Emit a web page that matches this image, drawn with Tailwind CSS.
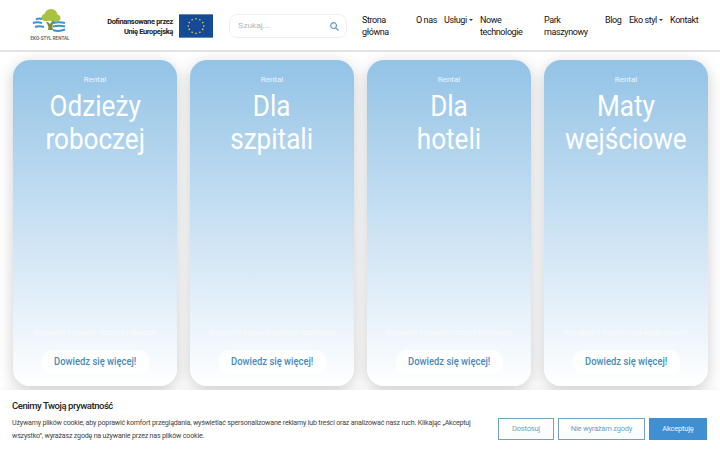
<!DOCTYPE html>
<html lang="pl"><head><meta charset="utf-8"><script src="https://cdn.jsdelivr.net/npm/@tailwindcss/browser@4"></script></head>
<body class="w-[720px] h-[450px] overflow-hidden bg-white relative font-['Roboto','Noto_Sans',sans-serif]">
<header class="h-[52px] border-b-2 border-[#e3e3e5] flex items-start bg-white">
  <div class="w-[100px] h-[50px] flex justify-center shrink-0 pt-[8px]">
    <svg width="46" height="34" viewBox="0 0 46 34">
      <path d="M21 22 C22 19 21 17 19 14 L21 14 L23 16 L26 12 L28 13 L25.500 17 C25.500 19 25.500 20 26 22 Z" fill="#7d8c3a"/>
      <ellipse cx="24" cy="7" rx="6.500" ry="6" fill="#a9c23f"/><ellipse cx="19" cy="9.500" rx="4.500" ry="3.800" fill="#a9c23f"/><ellipse cx="29" cy="10" rx="4.500" ry="3.500" fill="#a9c23f"/>
      <path d="M9 11.500 Q12 10 15 11 M6 15 Q10 13.500 15 15 M8 19 Q12 17.500 17 19 M26 15 Q32 13.500 38 15 M26 18.500 Q32 17 38 18.500 M26 22 Q32 24 38 21.500" stroke="#3c93d0" stroke-width="2" fill="none"/>
      <text x="23" y="32" text-anchor="middle" font-size="4.600" font-weight="500" fill="#555" font-family="Roboto">EKO-STYL RENTAL</text>
    </svg>
  </div>
  <div class="w-[73px] mt-[17px] text-right text-[7.500px] leading-[10px] font-bold text-[#222] whitespace-nowrap shrink-0 tracking-[-0.35px]"><div>Dofinansowane przez</div><div>Unię Europejską</div></div>
  <svg class="ml-[6px] mt-[14px] shrink-0" width="34" height="24" viewBox="0 0 35 24"><rect width="35" height="24" fill="#144a96"/><g fill="#ffd83c"><circle cx="17.500" cy="4.500" r=".8"/><circle cx="21.500" cy="5.500" r=".8"/><circle cx="24.500" cy="8.500" r=".8"/><circle cx="25.500" cy="12" r=".8"/><circle cx="24.500" cy="15.500" r=".8"/><circle cx="21.500" cy="18.500" r=".8"/><circle cx="17.500" cy="19.500" r=".8"/><circle cx="13.500" cy="18.500" r=".8"/><circle cx="10.500" cy="15.500" r=".8"/><circle cx="9.500" cy="12" r=".8"/><circle cx="10.500" cy="8.500" r=".8"/><circle cx="13.500" cy="5.500" r=".8"/></g></svg>
  <div class="ml-[16px] mt-[14px] w-[118px] h-[24px] border border-[#eceef0] rounded-[8px] flex items-center justify-between pl-[8px] pr-[7px] shrink-0">
    <span class="text-[8px] text-[#a9b0b6] font-['Liberation_Sans'] tracking-[0.1px]">Szukaj...</span>
    <svg width="9" height="9" viewBox="0 0 9 9" fill="none" stroke="#5c94c0" stroke-width="1.200"><circle cx="3.600" cy="3.600" r="2.900"/><path d="M5.800 5.800 L8.500 8.500"/></svg>
  </div>
  <nav class="ml-[15px] mt-[13.500px] text-[9px] leading-[12.500px] text-[#111] relative flex shrink-0 tracking-[-0.4px]">
    <a class="w-[54px]">Strona<br>główna</a>
    <a class="w-[28px]">O nas</a>
    <a class="w-[36px] flex items-start">Usługi<span class="ml-[2px] mt-[5px] border-x-[2px] border-x-transparent border-t-[2px] border-t-[#333] w-0 h-0"></span></a>
    <a class="w-[64px]">Nowe<br>technologie</a>
    <a class="w-[61px]">Park<br>maszynowy</a>
    <a class="w-[24px]">Blog</a>
    <a class="w-[41px] flex items-start">Eko styl<span class="ml-[2px] mt-[5px] border-x-[2px] border-x-transparent border-t-[2px] border-t-[#333] w-0 h-0"></span></a>
    <a>Kontakt</a>
  </nav>
</header>
<main class="flex gap-[13px] px-[13px] pt-[8px]">
  <article class="w-[164px] h-[326px] shrink-0 rounded-[17px] bg-gradient-to-b from-[#93c3e6] to-white shadow-[0_4px_16px_rgba(0,0,0,0.2)] flex flex-col items-center text-white">
    <p class="mt-[15px] text-[8px] leading-[10px] text-white/80">Rental</p>
    <h2 class="mt-[4px] text-[30px] leading-[33px] text-center scale-x-[0.87]">Odzieży<br>roboczej</h2>
    <p class="mt-auto text-[8px] leading-[9px] text-white/70 whitespace-nowrap">Wynajem i serwis odzieży roboczej</p>
    <a class="mt-[13px] mb-[12px] w-[107px] h-[24px] rounded-[10px] bg-white/90 flex items-center justify-center text-[11.500px] font-medium text-[#4a8ab8]"><span class="scale-x-[0.82] whitespace-nowrap">Dowiedz się więcej!</span></a>
  </article>
  <article class="w-[164px] h-[326px] shrink-0 rounded-[17px] bg-gradient-to-b from-[#93c3e6] to-white shadow-[0_4px_16px_rgba(0,0,0,0.2)] flex flex-col items-center text-white">
    <p class="mt-[15px] text-[8px] leading-[10px] text-white/80">Rental</p>
    <h2 class="mt-[4px] text-[30px] leading-[33px] text-center scale-x-[0.87]">Dla<br>szpitali</h2>
    <p class="mt-auto text-[8px] leading-[9px] text-white/70 whitespace-nowrap">Wynajem i serwis odzieży szpitalnej</p>
    <a class="mt-[13px] mb-[12px] w-[107px] h-[24px] rounded-[10px] bg-white/90 flex items-center justify-center text-[11.500px] font-medium text-[#4a8ab8]"><span class="scale-x-[0.82] whitespace-nowrap">Dowiedz się więcej!</span></a>
  </article>
  <article class="w-[164px] h-[326px] shrink-0 rounded-[17px] bg-gradient-to-b from-[#93c3e6] to-white shadow-[0_4px_16px_rgba(0,0,0,0.2)] flex flex-col items-center text-white">
    <p class="mt-[15px] text-[8px] leading-[10px] text-white/80">Rental</p>
    <h2 class="mt-[4px] text-[30px] leading-[33px] text-center scale-x-[0.87]">Dla<br>hoteli</h2>
    <p class="mt-auto text-[8px] leading-[9px] text-white/70 whitespace-nowrap">Wynajem i serwis odzieży hotelowej</p>
    <a class="mt-[13px] mb-[12px] w-[107px] h-[24px] rounded-[10px] bg-white/90 flex items-center justify-center text-[11.500px] font-medium text-[#4a8ab8]"><span class="scale-x-[0.82] whitespace-nowrap">Dowiedz się więcej!</span></a>
  </article>
  <article class="w-[164px] h-[326px] shrink-0 rounded-[17px] bg-gradient-to-b from-[#93c3e6] to-white shadow-[0_4px_16px_rgba(0,0,0,0.2)] flex flex-col items-center text-white">
    <p class="mt-[15px] text-[8px] leading-[10px] text-white/80">Rental</p>
    <h2 class="mt-[4px] text-[30px] leading-[33px] text-center scale-x-[0.87]">Maty<br>wejściowe</h2>
    <p class="mt-auto text-[8px] leading-[9px] text-white/70 whitespace-nowrap">Wynajem i serwis mat wejściowych</p>
    <a class="mt-[13px] mb-[12px] w-[107px] h-[24px] rounded-[10px] bg-white/90 flex items-center justify-center text-[11.500px] font-medium text-[#4a8ab8]"><span class="scale-x-[0.82] whitespace-nowrap">Dowiedz się więcej!</span></a>
  </article>
</main>
<section class="absolute left-0 right-0 bottom-0 h-[60px] bg-white flex items-start px-[12px] shadow-[0_-2px_6px_rgba(0,0,0,0.04)]">
  <div class="w-[462px] shrink-0">
    <h3 class="mt-[10px] text-[9.500px] leading-[12px] font-medium text-[#222] tracking-[-0.45px]">Cenimy Twoją prywatność</h3>
    <p class="mt-[5px] text-[7.100px] leading-[12.500px] text-[#444] tracking-[-0.2px]">Używamy plików cookie, aby poprawić komfort przeglądania, wyświetlać spersonalizowane reklamy lub treści oraz analizować nasz ruch. Klikając „Akceptuj wszystko”, wyrażasz zgodę na używanie przez nas plików cookie.</p>
  </div>
  <div class="ml-auto mr-[1px] mt-[28px] flex gap-[4px] text-[7.500px] tracking-[-0.2px]">
    <button class="w-[56px] h-[22px] border-[1.500px] border-[#6fa3be] text-[#6b9fc0]">Dostosuj</button>
    <button class="w-[87px] h-[22px] border-[1.500px] border-[#6fa3be] text-[#6b9fc0]">Nie wyrażam zgody</button>
    <button class="w-[58px] h-[22px] bg-[#3f8fd2] text-white/90">Akceptuję</button>
  </div>
</section>
</body></html>
